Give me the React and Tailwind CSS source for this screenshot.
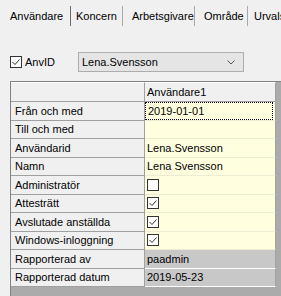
const tabs = [
  { label: 'Användare', w: 'w-[71px]', pl: 'pl-[10px]', sep: 'border-[#6e6e6e]' },
  { label: 'Koncern', w: 'w-[52px]', pl: 'pl-[5px]', sep: 'border-[#a8a8a8]' },
  { label: 'Arbetsgivare', w: 'w-[72px]', pl: 'pl-[9px]', sep: 'border-[#a8a8a8]' },
  { label: 'Område', w: 'w-[53px]', pl: 'pl-[9px]', sep: 'border-[#a8a8a8]' },
];

const rows = [
  { label: 'Från och med', value: '2019-01-01', focus: true },
  { label: 'Till och med', value: '' },
  { label: 'Användarid', value: 'Lena.Svensson' },
  { label: 'Namn', value: 'Lena Svensson' },
  { label: 'Administratör', check: false },
  { label: 'Attesträtt', check: true },
  { label: 'Avslutade anställda', check: true },
  { label: 'Windows-inloggning', check: true },
  { label: 'Rapporterad av', value: 'paadmin', readOnly: true },
  { label: 'Rapporterad datum', value: '2019-05-23', readOnly: true },
];

function CheckBox({ checked, bg = 'bg-white' }) {
  return (
    <div className={`w-[12px] h-[12px] border border-[#333333] ${bg} flex items-center justify-center shrink-0`}>
      {checked && (
        <svg width="10" height="10" viewBox="0 0 10 10">
          <path d="M1.5 5 L4 7.5 L8.5 2.5" fill="none" stroke="#333333" strokeWidth="1" />
        </svg>
      )}
    </div>
  );
}

export default function App() {
  return (
    <div
      className="w-[281px] h-[296px] bg-[#f0f0f0] overflow-hidden flex flex-col text-[11px] text-black"
      style={{ fontFamily: '"Liberation Sans", Arial, sans-serif' }}
    >
      {/* Tabs */}
      <div className="h-[28px] flex items-start pt-[6px] shrink-0">
        {tabs.map((t) => (
          <div key={t.label} className={`${t.w} ${t.pl} h-[20px] flex items-center border-r ${t.sep} shrink-0`}>
            {t.label}
          </div>
        ))}
        <div className="pl-[6px] h-[20px] flex items-center whitespace-nowrap">Urvals</div>
      </div>

      {/* AnvID row */}
      <div className="mt-[24px] h-[20px] flex items-center shrink-0">
        <div className="ml-[10px]">
          <CheckBox checked />
        </div>
        <span className="ml-[3px]">AnvID</span>
        <div className="ml-[23px] w-[166px] h-[20px] bg-[#e5e5e5] border border-[#adadad] flex items-center justify-between pl-[3px] pr-[8px]">
          <span>Lena.Svensson</span>
          <svg width="8" height="5" viewBox="0 0 8 5">
            <path d="M0.5 0.5 L4 4 L7.5 0.5" fill="none" stroke="#555555" strokeWidth="1" />
          </svg>
        </div>
      </div>

      {/* Grid */}
      <div className="mt-[9px] ml-[10px] flex-1 bg-[#ababab] border-l border-t border-[#828282]">
        <div className="w-[265px] flex flex-col">
          <div className="flex h-[20px]">
            <div className="w-[134px] bg-[#f0f0f0] border-r border-b border-[#a0a0a0] border-t border-t-white" />
            <div className="w-[131px] bg-[#f0f0f0] border-r border-b border-[#a0a0a0] border-t border-t-white pl-[2px] flex items-center">
              Användare1
            </div>
          </div>
          {rows.map((r) => (
            <div key={r.label} className="flex h-[18.5px]">
              <div className="w-[134px] bg-[#f0f0f0] border-r border-b border-[#a0a0a0] pl-[4px] flex items-center whitespace-nowrap">
                {r.label}
              </div>
              <div
                className={`w-[131px] border-r border-[#a0a0a0] flex items-center pl-[2px] ${
                  r.readOnly ? 'bg-[#c8c8c8] border-b border-b-white' : 'bg-[#ffffe0] border-b border-b-[#ecebd3]'
                }`}
              >
                {r.focus ? (
                  <div className="w-full h-full -ml-[2px] pl-[2px] border border-dotted border-black flex items-center">
                    {r.value}
                  </div>
                ) : r.check !== undefined ? (
                  <CheckBox checked={r.check} />
                ) : (
                  r.value
                )}
              </div>
            </div>
          ))}
        </div>
      </div>
    </div>
  );
}
